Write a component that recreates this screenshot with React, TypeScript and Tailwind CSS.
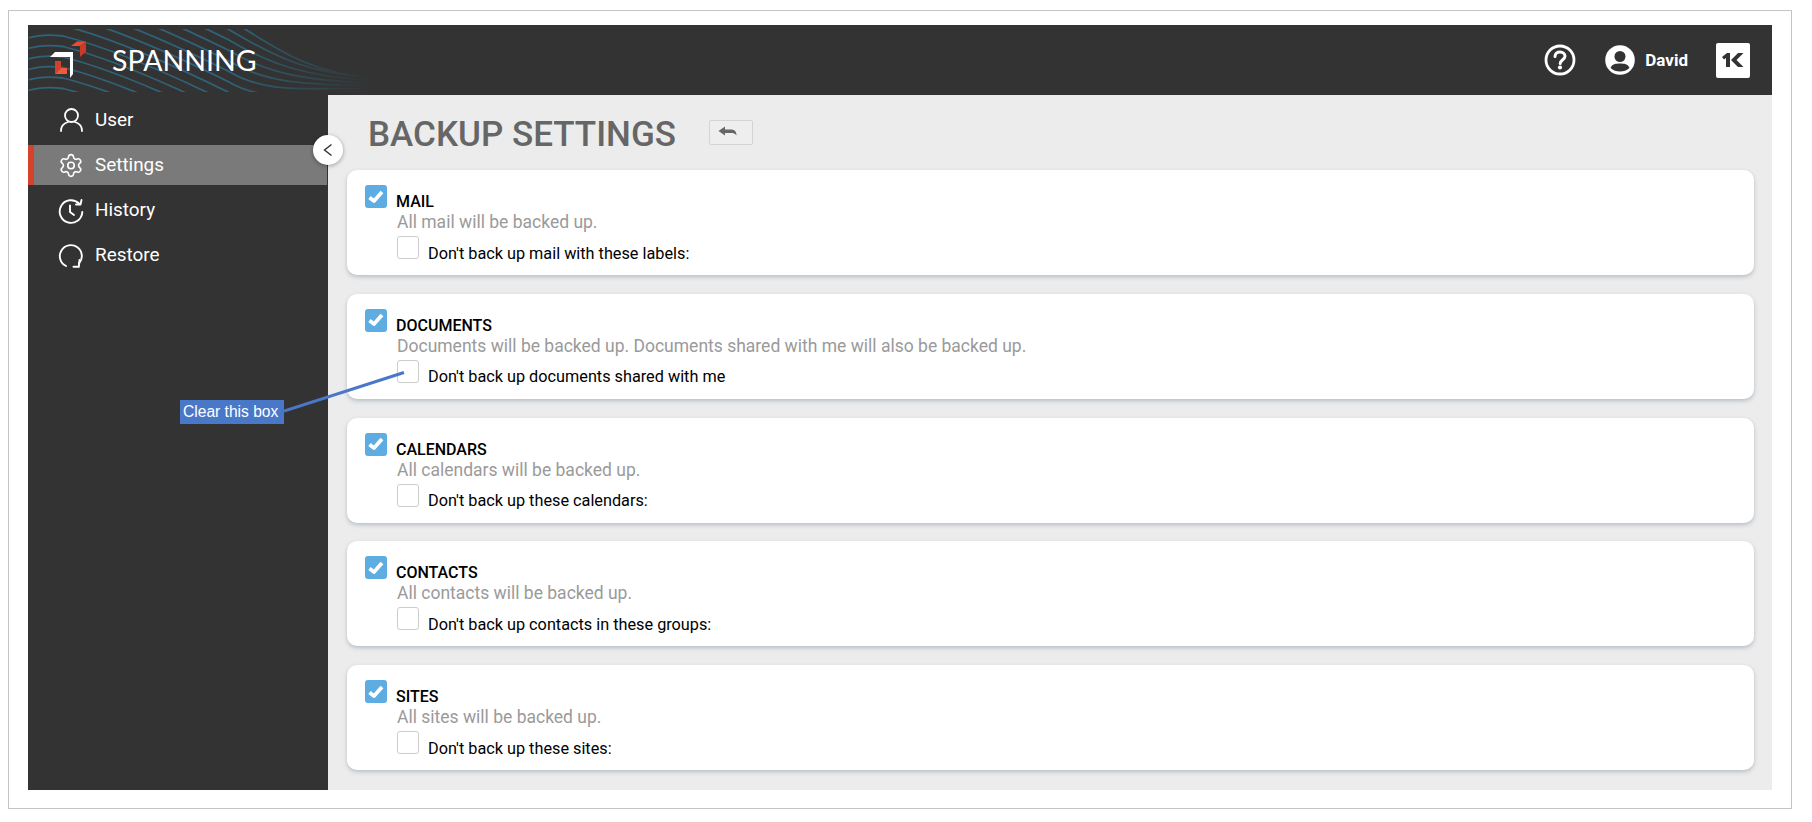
import { Settings } from "lucide-react";

const cards = [
  { title: "MAIL", desc: "All mail will be backed up.", sub: "Don't back up mail with these labels:" },
  { title: "DOCUMENTS", desc: "Documents will be backed up. Documents shared with me will also be backed up.", sub: "Don't back up documents shared with me" },
  { title: "CALENDARS", desc: "All calendars will be backed up.", sub: "Don't back up these calendars:" },
  { title: "CONTACTS", desc: "All contacts will be backed up.", sub: "Don't back up contacts in these groups:" },
  { title: "SITES", desc: "All sites will be backed up.", sub: "Don't back up these sites:" },
];

function Waves() {
  const lines = [];
  for (let n = -1; n < 14; n++) {
    const y0 = -60.5 + 10.5 * n;
    const y200 = y0 + 64.5;
    const ye = 52 + Math.max(n, 0) * 3;
    lines.push(
      <path
        key={n}
        d={`M0 ${y0} C 10 ${y0 - 3}, 20 ${y0 - 4}, 35 ${y0 - 2} C 75 ${y0 + 8}, 130 ${y0 + 30}, 200 ${y200} C 240 ${y200 + 24}, 280 ${ye - 2}, 345 ${ye}`}
      />
    );
  }
  return (
    <svg className="absolute left-0 top-[4px] pointer-events-none" width="350" height="63" viewBox="0 4 350 63" fill="none" stroke="#2f6379" strokeWidth="1.8">
      <defs>
        <linearGradient id="fade" x1="0" x2="1" y1="0" y2="0">
          <stop offset="0" stopColor="#fff" />
          <stop offset="0.57" stopColor="#fff" />
          <stop offset="0.98" stopColor="#000" />
        </linearGradient>
        <mask id="fm" maskUnits="userSpaceOnUse" x="0" y="0" width="350" height="70">
          <rect width="350" height="70" fill="url(#fade)" />
        </mask>
      </defs>
      <g mask="url(#fm)">{lines}</g>
    </svg>
  );
}

function Logo() {
  return (
    <svg width="38" height="38" viewBox="0 0 38 38" className="shrink-0">
      <path d="M0 16 L5 11 H23 V33 L20 37 V16 Z" fill="#fff" />
      <path d="M21 5 L27 0.5 H36 L30 5 Z" fill="#ea4c30" />
      <path d="M30 5 L36 0.5 V10.5 L30 16 Z" fill="#c93b27" />
      <path d="M5 20 H11 V27 L5 33 Z" fill="#d63f2a" />
      <path d="M5 33 L11 27 H17 V33 Z" fill="#ee5a3c" />
    </svg>
  );
}

function UserIcon() {
  return (
    <svg width="23" height="24" viewBox="0 0 23 24" fill="none" stroke="#fff" strokeWidth="1.8" strokeLinecap="round">
      <circle cx="11.5" cy="7.5" r="6.5" />
      <path d="M1 23 C1 18 4.5 15 8 14 M22 23 C22 18 18.5 15 15 14" />
    </svg>
  );
}
function HistoryIcon() {
  return (
    <svg width="26" height="26" viewBox="0 0 26 26" fill="none" stroke="#fff" strokeWidth="1.9" strokeLinecap="round" strokeLinejoin="round">
      <path d="M21 5.5 A11.3 11.3 0 1 0 24.3 14" />
      <path d="M12 7.5 V14 L16 17" />
      <path d="M18 6.5 L22.5 6.5 L23.5 2" />
    </svg>
  );
}
function RestoreIcon() {
  return (
    <svg width="26" height="26" viewBox="0 0 26 26" fill="none" stroke="#fff" strokeWidth="1.9" strokeLinecap="round" strokeLinejoin="round">
      <path d="M8 23 A11 11 0 1 1 21 20.5" />
      <path d="M21.5 17 L20.8 23.8 L15.5 23.8" />
    </svg>
  );
}

function Checked() {
  return (
    <div className="w-[22px] h-[23px] rounded-[3px] bg-[#5dade2] flex items-center justify-center shrink-0">
      <svg width="16" height="14" viewBox="0 0 16 14" fill="none" stroke="#fff" strokeWidth="3.8" strokeLinejoin="round">
        <path d="M1.5 7.5 L6 11 L14 2" />
      </svg>
    </div>
  );
}

function Card({ title, desc, sub }: { title: string; desc: string; sub: string }) {
  return (
    <div className="h-[105px] bg-white rounded-[10px] shadow-[0_2px_4px_rgba(120,135,150,0.45)] pl-[18px] pt-[15px] flex gap-[9px]">
      <Checked />
      <div className="flex flex-col">
        <div className="h-[26px] flex items-end text-[16px] leading-[18px] font-medium text-black">{title}</div>
        <div className="ml-[1px] text-[17.5px] leading-[20px] text-[#9a9a9a] mt-[1px]">{desc}</div>
        <div className="ml-[1px] mt-[4px] flex">
          <div className="w-[22px] h-[23px] rounded-[3px] border border-[#cccccc] bg-white shrink-0" />
          <span className="ml-[9px] mt-[7.5px] text-[16.25px] leading-[20px] text-black">{sub}</span>
        </div>
      </div>
    </div>
  );
}

function NavItem({ icon, label, active, className }: { icon: React.ReactNode; label: string; active?: boolean; className?: string }) {
  return (
    <div className={(active ? "h-[40px] bg-[#7a7a7a] border-l-[6px] border-[#d64129] pl-[24px] mr-[1px] " : "h-[45px] pl-[30px] ") + "flex items-center " + (className ?? "")}>
      <div className="w-[26px] h-[26px] flex items-center justify-center shrink-0">{icon}</div>
      <span className="ml-[11px] text-[18.9px] text-white">{label}</span>
    </div>
  );
}

export default function App() {
  return (
    <div className="w-[1812px] h-[822px] bg-white pt-[10px] pl-[8px] overflow-hidden" style={{ fontFamily: "Roboto, sans-serif" }}>
      <div className="w-[1784px] h-[799px] border border-[#c4c4c4] pt-[14px] pl-[19px]">
        <div className="relative w-[1744px] h-[765px] flex flex-col">
          <header className="relative h-[70px] bg-[#333333] flex items-center pl-[22px] pr-[22px] shrink-0">
            <Waves />
            <div className="relative flex items-center">
              <Logo />
              <span className="ml-[24px] text-[28.5px] text-white" style={{ fontFamily: "Lato, sans-serif" }}>SPANNING</span>
            </div>
            <div className="ml-auto flex items-center">
              <svg width="32" height="32" viewBox="0 0 32 32" fill="none">
                <circle cx="16" cy="16" r="14" stroke="#fff" strokeWidth="2.8" />
                <path d="M11 12.5 C11 9.5 13.3 8 16 8 C19 8 21 10 21 12.3 C21 15.5 16.2 16 16.2 19.5" stroke="#fff" strokeWidth="3" strokeLinecap="round" />
                <circle cx="16" cy="23.5" r="2.1" fill="#fff" />
              </svg>
              <svg className="ml-[29px]" width="30" height="30" viewBox="0 0 30 30">
                <circle cx="15" cy="15" r="14.8" fill="#fff" />
                <circle cx="15" cy="11.5" r="5.5" fill="#333" />
                <path d="M5.5 23 C7 19 11 18.5 15 18.5 C19 18.5 23 19 24.5 23 C22 25.5 18.5 26.5 15 26.5 C11.5 26.5 8 25.5 5.5 23 Z" fill="#333" />
              </svg>
              <span className="ml-[10px] mt-[1px] text-[17px] font-bold text-white">David</span>
              <div className="ml-[28px] w-[34px] h-[35px] bg-white rounded-[2px] flex items-center justify-center">
                <svg width="22" height="14" viewBox="0 0 22 14" fill="#333">
                  <path d="M0 4 L5 0 H8 V14 H4 V5 L2 6.5 Z" />
                  <path d="M9 7 L16 0 H21.5 L14.5 7 L21.5 14 H16 Z" />
                </svg>
              </div>
            </div>
          </header>
          <div className="flex flex-1 min-h-0">
            <aside className="w-[300px] bg-[#333333] shrink-0">
              <NavItem icon={<UserIcon />} label="User" className="h-[50px]" />
              <NavItem icon={<Settings size={29} strokeWidth={1.5} color="#fff" />} label="Settings" active />
              <div className="h-[3px]" />
              <NavItem icon={<HistoryIcon />} label="History" />
              <NavItem icon={<RestoreIcon />} label="Restore" />
            </aside>
            <main className="flex-1 bg-[#ececec] pl-[19px] pr-[18px]">
              <div className="h-[75px] flex items-start pl-[21px] pt-[20px]">
                <h1 className="text-[35px] leading-[40px] font-medium text-[#666666]">BACKUP SETTINGS</h1>
                <div className="ml-[33px] mt-[5px] w-[44px] h-[25px] bg-[#eeeeee] border border-[#d4d4d4] rounded-[2px] flex items-start justify-center pt-[5px] pr-[6px]">
                  <svg width="20" height="12" viewBox="0 0 20 12" fill="none">
                    <path d="M0.5 5 L7 0.5 V3.5 H13 C16.5 3.5 18.5 5.5 18.5 9.5 C17 7.5 15.5 7 13 7 H7 V9.5 Z" fill="#666" />
                  </svg>
                </div>
              </div>
              <div className="flex flex-col gap-[18.75px]">
                {cards.map((c) => (
                  <Card key={c.title} {...c} />
                ))}
              </div>
            </main>
          </div>
          <div className="absolute left-[285px] top-[110px] w-[30px] h-[30px] rounded-full bg-white shadow-[0_1px_4px_rgba(0,0,0,0.35)] flex items-center justify-center">
            <svg width="12" height="14" viewBox="0 0 12 14" fill="none" stroke="#333" strokeWidth="1.4">
              <path d="M9.5 1.5 L2.5 7 L9.5 12.5" />
            </svg>
          </div>
          <svg className="absolute left-[256px] top-[340px] pointer-events-none" width="124" height="50" viewBox="0 0 124 50" fill="none">
            <path d="M0 46 L120 7.5" stroke="#4a78c8" strokeWidth="3" />
          </svg>
          <div className="absolute left-[152px] top-[375px] w-[104px] h-[24px] bg-[#4a78c8] text-white text-[15.6px] leading-[24px] pl-[3px]" style={{ fontFamily: "'Liberation Sans', sans-serif" }}>Clear this box</div>
        </div>
      </div>
    </div>
  );
}
